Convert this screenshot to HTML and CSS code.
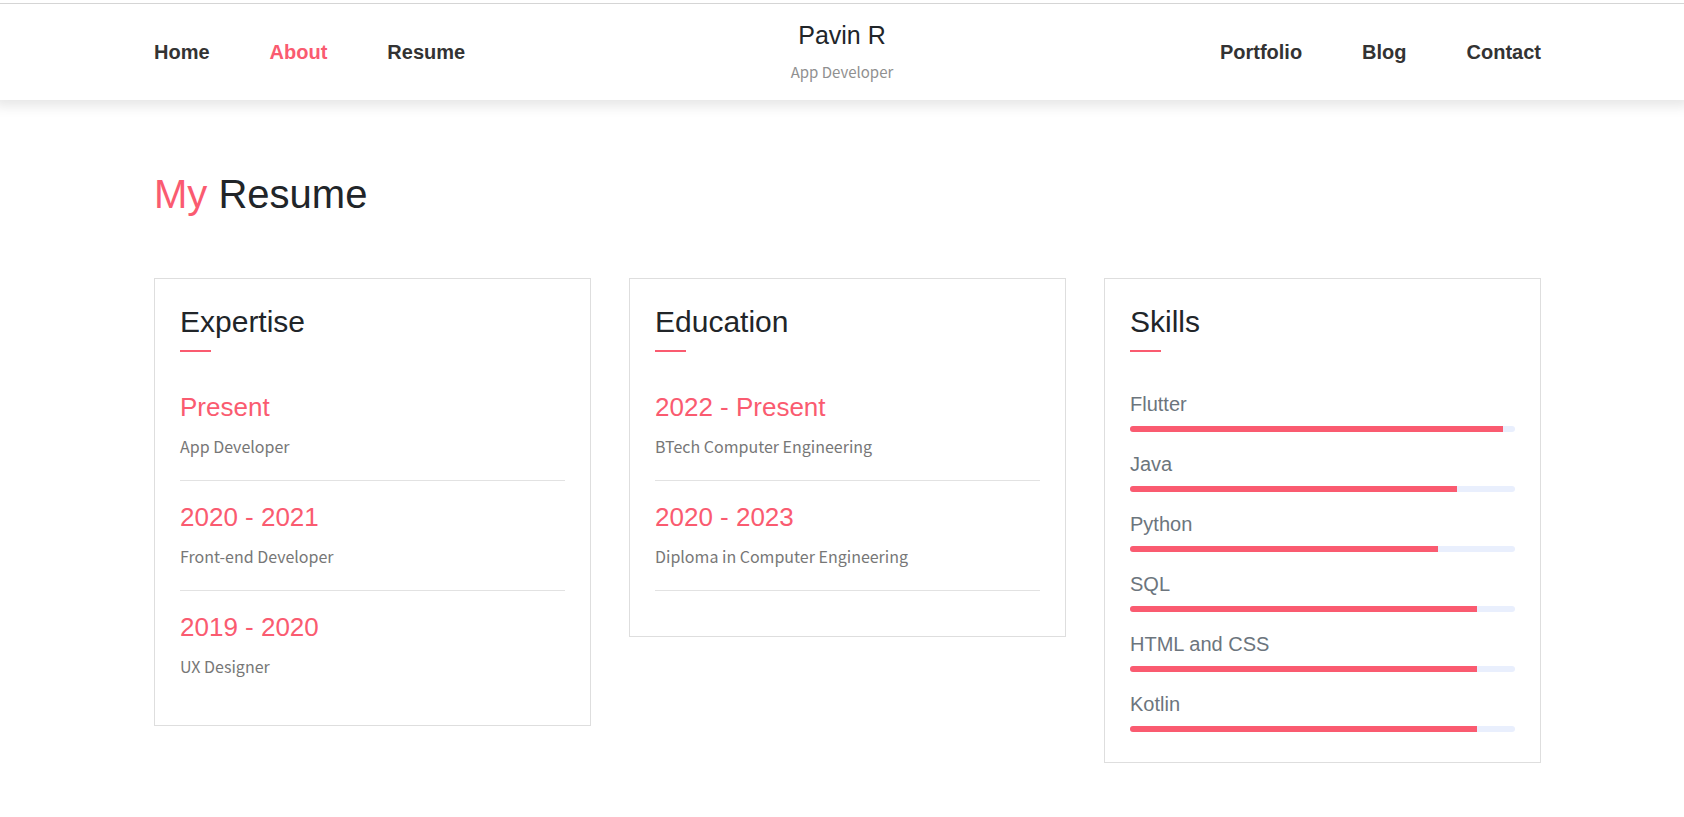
FILE: index.html
```
<!DOCTYPE html>
<html lang="en">
<head>
  <meta charset="utf-8">
  <meta name="viewport" content="width=device-width, initial-scale=1">
  <title>Pavin R - Resume</title>
  <link rel="stylesheet" href="styles.css">
</head>
<body>
  <header class="site-header">
    <nav class="nav nav-left" aria-label="Primary">
      <a class="nav-link" href="#home">Home</a>
      <a class="nav-link active" href="#about">About</a>
      <a class="nav-link" href="#resume">Resume</a>
    </nav>
    <div class="brand">
      <span class="brand-name">Pavin R</span>
      <span class="brand-role">App Developer</span>
    </div>
    <nav class="nav nav-right" aria-label="Secondary">
      <a class="nav-link" href="#portfolio">Portfolio</a>
      <a class="nav-link" href="#blog">Blog</a>
      <a class="nav-link" href="#contact">Contact</a>
    </nav>
  </header>

  <main class="resume" id="resume">
    <h1 class="page-title"><span class="accent">My</span> Resume</h1>
    <div class="cards">
      <section class="card">
        <h2 class="card-title">Expertise</h2>
        <div class="entry">
          <h3 class="entry-date">Present</h3>
          <p class="entry-text">App Developer</p>
        </div>
        <div class="entry">
          <h3 class="entry-date">2020 - 2021</h3>
          <p class="entry-text">Front-end Developer</p>
        </div>
        <div class="entry entry-open">
          <h3 class="entry-date">2019 - 2020</h3>
          <p class="entry-text">UX Designer</p>
        </div>
      </section>

      <section class="card">
        <h2 class="card-title">Education</h2>
        <div class="entry">
          <h3 class="entry-date">2022 - Present</h3>
          <p class="entry-text">BTech Computer Engineering</p>
        </div>
        <div class="entry">
          <h3 class="entry-date">2020 - 2023</h3>
          <p class="entry-text">Diploma in Computer Engineering</p>
        </div>
      </section>

      <section class="card card-skills">
        <h2 class="card-title">Skills</h2>
        <div class="skills">
          <div class="skill">
            <h3 class="skill-name" id="s1">Flutter</h3>
            <div class="bar" role="progressbar" aria-labelledby="s1" aria-valuenow="97"><div class="bar-fill" style="width:97%"></div></div>
          </div>
          <div class="skill">
            <h3 class="skill-name" id="s2">Java</h3>
            <div class="bar" role="progressbar" aria-labelledby="s2" aria-valuenow="85"><div class="bar-fill" style="width:85%"></div></div>
          </div>
          <div class="skill">
            <h3 class="skill-name" id="s3">Python</h3>
            <div class="bar" role="progressbar" aria-labelledby="s3" aria-valuenow="80"><div class="bar-fill" style="width:80%"></div></div>
          </div>
          <div class="skill">
            <h3 class="skill-name" id="s4">SQL</h3>
            <div class="bar" role="progressbar" aria-labelledby="s4" aria-valuenow="90"><div class="bar-fill" style="width:90%"></div></div>
          </div>
          <div class="skill">
            <h3 class="skill-name" id="s5">HTML and CSS</h3>
            <div class="bar" role="progressbar" aria-labelledby="s5" aria-valuenow="90"><div class="bar-fill" style="width:90%"></div></div>
          </div>
          <div class="skill">
            <h3 class="skill-name" id="s6">Kotlin</h3>
            <div class="bar" role="progressbar" aria-labelledby="s6" aria-valuenow="90"><div class="bar-fill" style="width:90%"></div></div>
          </div>
        </div>
      </section>
    </div>
  </main>
</body>
</html>
```
FILE: styles.css
```
* {
  box-sizing: border-box;
}

body {
  margin: 0;
  padding-top: 3px;
  background: #fff;
  color: #212529;
  font-family: "Liberation Sans", Arial, sans-serif;
}

h1, h2, h3, p {
  margin: 0;
  font-weight: 400;
}

.site-header {
  display: grid;
  grid-template-columns: 1fr auto 1fr;
  align-items: center;
  padding: 16px 143px;
  border-top: 1px solid #d5d5d5;
  background: #fff;
  box-shadow: 0 0 12px 6px rgba(0, 0, 0, 0.1);
  /* keep the shadow on the lower edge only */
  clip-path: inset(0 0 -20px 0);
}

.nav {
  display: flex;
  gap: 60px;
}

.nav-left {
  padding-left: 11px;
}

.nav-right {
  justify-content: flex-end;
}

.nav-link {
  color: #333;
  font-size: 20px;
  font-weight: 700;
  line-height: 24px;
  text-decoration: none;
}

.nav-link.active,
.accent {
  color: #fa5b70;
}

.brand {
  display: flex;
  flex-direction: column;
  align-items: center;
  gap: 10px;
}

.brand-name {
  font-size: 25px;
  line-height: 30px;
}

.brand-role {
  color: #909090;
  font-family: "Noto Sans CJK SC", sans-serif;
  font-size: 15px;
  line-height: 24px;
}

.resume {
  padding: 70px 143px 40px 154px;
}

.page-title {
  margin-bottom: 60px;
  font-size: 40px;
  line-height: 48px;
}

.cards {
  display: grid;
  grid-template-columns: repeat(3, 1fr);
  align-items: start;
  gap: 38px;
}

.card {
  padding: 25px;
  border: 1px solid #dedede;
}

.card-title {
  margin-bottom: 39px;
  font-size: 30px;
  line-height: 36px;
}

.card-title::after {
  content: "";
  display: block;
  width: 31px;
  height: 2px;
  margin-top: 10px;
  background: #fa5b70;
}

.entry {
  margin-bottom: 20px;
  padding-bottom: 20px;
  border-bottom: 1px solid #e2e2e2;
}

.entry-open {
  margin-bottom: 0;
  border-bottom: 0;
}

.entry-date {
  margin-bottom: 9px;
  color: #fa5b70;
  font-size: 26px;
  line-height: 32px;
}

.entry-text {
  color: #777;
  font-family: "Noto Sans CJK SC", sans-serif;
  font-size: 16px;
  line-height: 28px;
}

.skills {
  display: grid;
  gap: 19px;
  padding-bottom: 5px;
}

.skill {
  display: grid;
  gap: 9px;
}

.skill-name {
  color: #6c757d;
  font-size: 20px;
  line-height: 26px;
}

.bar {
  height: 6px;
  overflow: hidden;
  border-radius: 3px;
  background: #e9effd;
}

.bar-fill {
  height: 100%;
  background: #fa5b70;
}
```
